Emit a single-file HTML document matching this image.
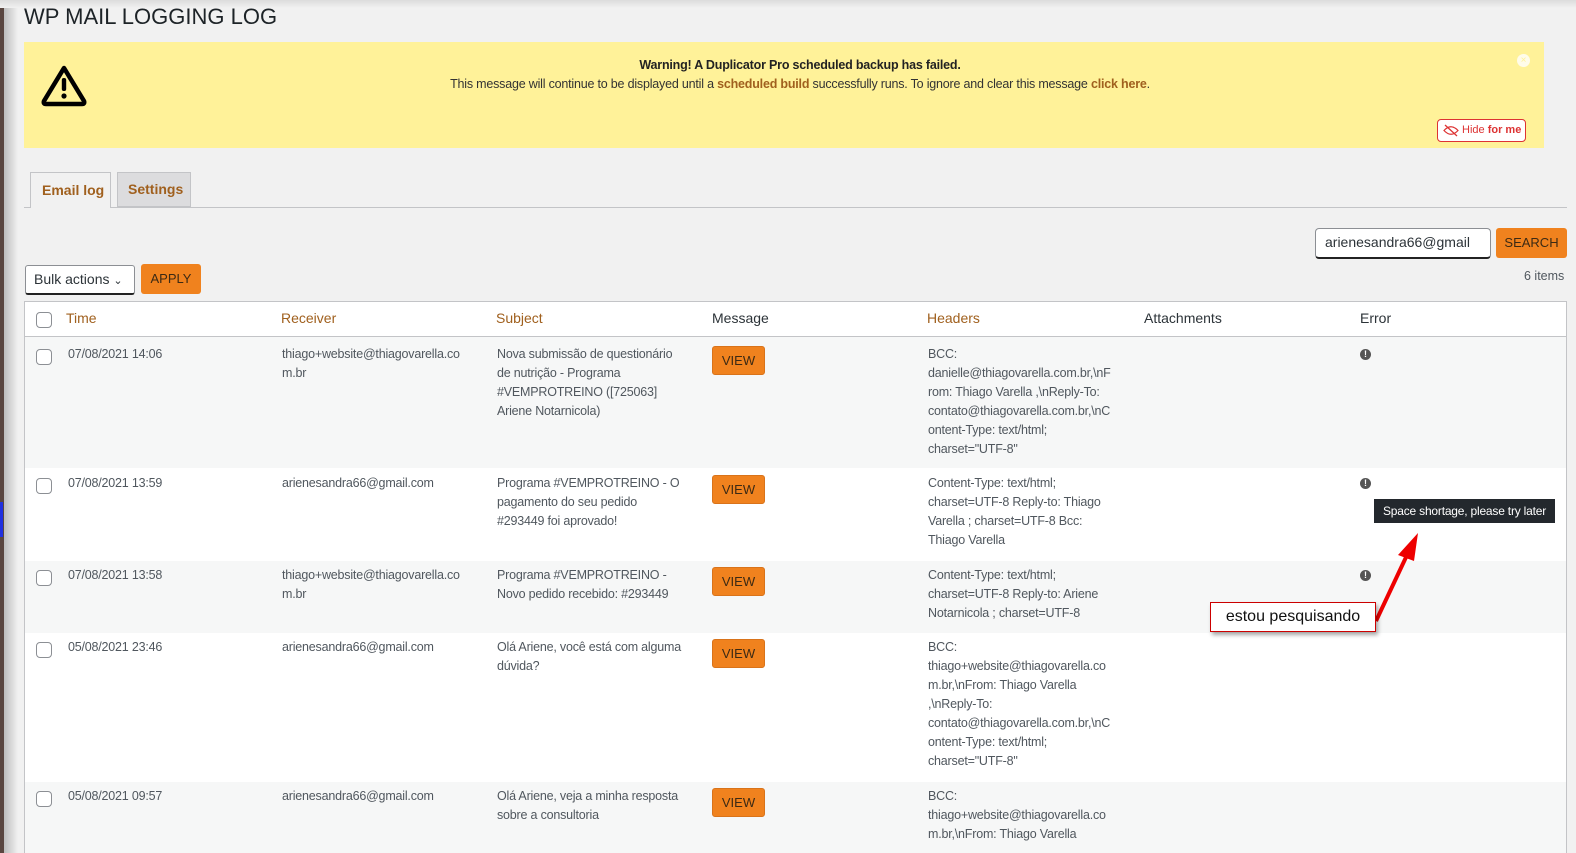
<!DOCTYPE html>
<html><head><meta charset="utf-8"><style>
*{margin:0;padding:0;box-sizing:border-box}
html,body{width:1576px;height:853px;overflow:hidden;margin:0}
body{background:#f1f1f1;font-family:"Liberation Sans",sans-serif;color:#50575e}
#w{position:absolute;left:0;top:0;width:1576px;height:853px;overflow:hidden;contain:paint}
.a{position:absolute;white-space:nowrap}
.t{font-size:12.5px;line-height:19px;color:#50575e;letter-spacing:-0.2px}
.h{font-size:14px;color:#a0601e}
.cb{position:absolute;left:36px;width:16px;height:16px;border:1px solid #8c8f94;border-radius:4px;background:#fff}
.view{position:absolute;left:712px;width:53px;height:29px;background:#f0821e;border:1px solid #d9731a;border-radius:3px;color:#3c2a14;font-size:13px;text-align:center;line-height:27px}
.err{position:absolute;left:1360px;width:11px;height:11px;border-radius:50%;background:#555;color:#fff;font-size:9px;font-weight:bold;text-align:center;line-height:11px}
</style></head><body><div id="w">
<div class="a" style="left:0;top:0;width:4px;height:853px;background:#5a4640"></div>
<div class="a" style="left:4px;top:0;width:14px;height:853px;background:linear-gradient(90deg,#bdbdbd,#f1f1f1)"></div>
<div class="a" style="left:0;top:502px;width:3px;height:35px;background:#2030e0"></div>
<div class="a" style="left:0;top:0;width:1576px;height:8px;background:linear-gradient(#dcdcdc,#f1f1f1)"></div>
<div class="a" style="left:24px;top:4px;font-size:22px;color:#1d2327">WP MAIL LOGGING LOG</div>

<div class="a" style="left:24px;top:42px;width:1520px;height:106px;background:#fff299"></div>
<svg class="a" style="left:40px;top:63px" width="48" height="44" viewBox="0 0 48 44"><path d="M24 5 L44 38 Q45 41 42 41 L6 41 Q3 41 4 38 Z" fill="none" stroke="#000" stroke-width="4.5" stroke-linejoin="round"/><rect x="21.8" y="15" width="4.4" height="13" rx="2" fill="#000"/><circle cx="24" cy="33" r="2.6" fill="#000"/></svg>
<div class="a" style="left:24px;width:1552px;top:58px;text-align:center;font-size:12.5px;font-weight:bold;color:#222;letter-spacing:-0.2px">Warning! A Duplicator Pro scheduled backup has failed.</div>
<div class="a" style="left:24px;width:1552px;top:77px;text-align:center;font-size:12.5px;color:#333;letter-spacing:-0.2px">This message will continue to be displayed until a <b style="color:#a0601e">scheduled build</b> successfully runs. To ignore and clear this message <b style="color:#a0601e">click here</b>.</div>
<div class="a" style="left:1517px;top:54px;width:13px;height:13px;border-radius:50%;background:#fff;opacity:.8;color:#fff299;font-size:10px;text-align:center;line-height:13px">×</div>
<div class="a" style="left:1437px;top:119px;width:89px;height:23px;border:1px solid #d33;border-radius:4px;background:#fff;font-size:11px;color:#d33;line-height:21px;padding-left:24px">Hide <b>for me</b></div>
<svg class="a" style="left:1443px;top:124px" width="16" height="13" viewBox="0 0 16 13"><path d="M1 6.5 Q8 -1 15 6.5 Q8 14 1 6.5Z" fill="none" stroke="#d33" stroke-width="1.2"/><path d="M2 1 L14 12" stroke="#d33" stroke-width="1.3"/></svg>

<div class="a" style="left:24px;top:207px;width:1543px;height:1px;background:#c3c4c7"></div>
<div class="a" style="left:30px;top:172px;width:81px;height:36px;background:#f1f1f1;border:1px solid #c3c4c7;border-bottom:none;font-size:14px;font-weight:bold;color:#a0601e;line-height:34px;padding-left:11px">Email log</div>
<div class="a" style="left:117px;top:172px;width:74px;height:35px;background:#dcdcde;border:1px solid #c3c4c7;font-size:14px;font-weight:bold;color:#a0601e;line-height:33px;padding-left:10px">Settings</div>

<div class="a" style="left:1315px;top:228px;width:176px;height:31px;background:#fff;border:1px solid #8c8f94;border-bottom:2px solid #222;border-radius:4px;font-size:14px;color:#2c3338;line-height:27px;padding-left:9px;overflow:hidden">arienesandra66@gmail</div>
<div class="a" style="left:1496px;top:228px;width:71px;height:30px;background:#f0821e;border-radius:3px;font-size:13px;color:#3c2a14;line-height:30px;text-align:center">SEARCH</div>
<div class="a" style="left:1524px;top:269px;font-size:12.5px;color:#50575e">6 items</div>

<div class="a" style="left:25px;top:265px;width:110px;height:30px;background:#fff;border:1px solid #8c8f94;border-bottom:2px solid #222;border-radius:3px;font-size:14px;color:#2c3338;line-height:26px;padding-left:8px">Bulk actions <span style="font-size:11px">&#8964;</span></div>
<div class="a" style="left:141px;top:264px;width:60px;height:30px;background:#f0821e;border-radius:3px;font-size:13px;color:#3c2a14;line-height:30px;text-align:center">APPLY</div>

<div class="a" style="left:24px;top:301px;width:1543px;height:552px;background:#fff;border:1px solid #c3c4c7"></div>
<div class="a" style="left:25px;top:336px;width:1541px;height:1px;background:#c3c4c7"></div>
<div class="cb" style="top:312px"></div>
<div class="a h" style="left:66px;top:310px">Time</div>
<div class="a h" style="left:281px;top:310px">Receiver</div>
<div class="a h" style="left:496px;top:310px">Subject</div>
<div class="a h" style="left:712px;top:310px;color:#2c3338">Message</div>
<div class="a h" style="left:927px;top:310px">Headers</div>
<div class="a h" style="left:1144px;top:310px;color:#2c3338">Attachments</div>
<div class="a h" style="left:1360px;top:310px;color:#2c3338">Error</div>

<div class="a" style="left:25px;top:337px;width:1541px;height:131px;background:#f6f7f7"></div>
<div class="a" style="left:25px;top:561px;width:1541px;height:72px;background:#f6f7f7"></div>
<div class="a" style="left:25px;top:782px;width:1541px;height:71px;background:#f6f7f7"></div>

<div class="cb" style="top:349px"></div>
<div class="a t" style="left:68px;top:345px">07/08/2021 14:06</div>
<div class="a t" style="left:282px;top:345px">thiago+website@thiagovarella.co<br>m.br</div>
<div class="a t" style="left:497px;top:345px">Nova submissão de questionário<br>de nutrição - Programa<br>#VEMPROTREINO ([725063]<br>Ariene Notarnicola)</div>
<div class="view" style="top:346px">VIEW</div>
<div class="a t" style="left:928px;top:345px">BCC:<br>danielle@thiagovarella.com.br,\nF<br>rom: Thiago Varella ,\nReply-To:<br>contato@thiagovarella.com.br,\nC<br>ontent-Type: text/html;<br>charset="UTF-8"</div>
<div class="err" style="top:349px">!</div>

<div class="cb" style="top:478px"></div>
<div class="a t" style="left:68px;top:474px">07/08/2021 13:59</div>
<div class="a t" style="left:282px;top:474px">arienesandra66@gmail.com</div>
<div class="a t" style="left:497px;top:474px">Programa #VEMPROTREINO - O<br>pagamento do seu pedido<br>#293449 foi aprovado!</div>
<div class="view" style="top:475px">VIEW</div>
<div class="a t" style="left:928px;top:474px">Content-Type: text/html;<br>charset=UTF-8 Reply-to: Thiago<br>Varella ; charset=UTF-8 Bcc:<br>Thiago Varella</div>
<div class="err" style="top:478px">!</div>

<div class="cb" style="top:570px"></div>
<div class="a t" style="left:68px;top:566px">07/08/2021 13:58</div>
<div class="a t" style="left:282px;top:566px">thiago+website@thiagovarella.co<br>m.br</div>
<div class="a t" style="left:497px;top:566px">Programa #VEMPROTREINO -<br>Novo pedido recebido: #293449</div>
<div class="view" style="top:567px">VIEW</div>
<div class="a t" style="left:928px;top:566px">Content-Type: text/html;<br>charset=UTF-8 Reply-to: Ariene<br>Notarnicola ; charset=UTF-8</div>
<div class="err" style="top:570px">!</div>

<div class="cb" style="top:642px"></div>
<div class="a t" style="left:68px;top:638px">05/08/2021 23:46</div>
<div class="a t" style="left:282px;top:638px">arienesandra66@gmail.com</div>
<div class="a t" style="left:497px;top:638px">Olá Ariene, você está com alguma<br>dúvida?</div>
<div class="view" style="top:639px">VIEW</div>
<div class="a t" style="left:928px;top:638px">BCC:<br>thiago+website@thiagovarella.co<br>m.br,\nFrom: Thiago Varella<br>,\nReply-To:<br>contato@thiagovarella.com.br,\nC<br>ontent-Type: text/html;<br>charset="UTF-8"</div>

<div class="cb" style="top:791px"></div>
<div class="a t" style="left:68px;top:787px">05/08/2021 09:57</div>
<div class="a t" style="left:282px;top:787px">arienesandra66@gmail.com</div>
<div class="a t" style="left:497px;top:787px">Olá Ariene, veja a minha resposta<br>sobre a consultoria</div>
<div class="view" style="top:788px">VIEW</div>
<div class="a t" style="left:928px;top:787px">BCC:<br>thiago+website@thiagovarella.co<br>m.br,\nFrom: Thiago Varella</div>

<div class="a" style="left:1374px;top:499px;width:181px;height:24px;background:#23282d;color:#fff;font-size:12px;line-height:24px;text-align:center;letter-spacing:-0.2px">Space shortage, please try later</div>
<svg class="a" style="left:1360px;top:525px" width="70" height="110" viewBox="0 0 70 110"><line x1="16" y1="96" x2="48" y2="28" stroke="#e00" stroke-width="4"/><polygon points="58,8 38,30 54,36" fill="#e00"/></svg>
<div class="a" style="left:1210px;top:602px;width:166px;height:30px;background:#fff;border:1px solid #c00;box-shadow:2px 3px 4px rgba(0,0,0,.35);font-size:16px;color:#111;line-height:28px;text-align:center">estou pesquisando</div>
</div></body></html>
